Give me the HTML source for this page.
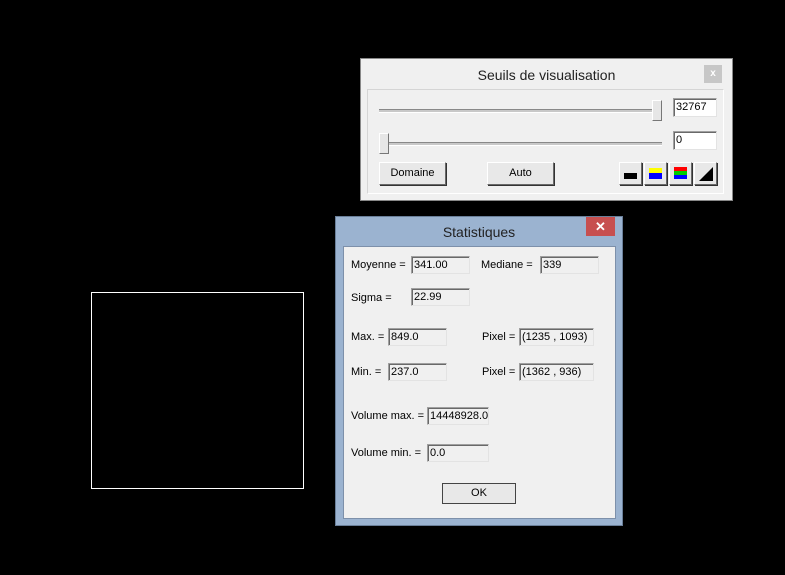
<!DOCTYPE html>
<html><head><meta charset="utf-8"><style>
*{margin:0;padding:0;box-sizing:border-box}
body{width:785px;height:575px;background:#000;position:relative;overflow:hidden;font-family:"Liberation Sans",sans-serif;font-size:11px;color:#000}
.a{position:absolute}
.lbl{position:absolute;font-size:11px;line-height:13px;white-space:nowrap}
.box{position:absolute;background:#f0f0f0;border:1px solid #a0a0a0;border-right-color:#e3e3e3;border-bottom-color:#e3e3e3;box-shadow:inset 1px 1px 0 #696969;font-size:11px;line-height:17px;padding-left:2px}
.wbox{position:absolute;background:#fff;border:1px solid #a0a0a0;border-right-color:#e3e3e3;border-bottom-color:#e3e3e3;box-shadow:inset 1px 1px 0 #696969;font-size:11px;line-height:17px;padding-left:2px}
.btn{position:absolute;background:#e8e8e8;border:1px solid #fff;border-right-color:#696969;border-bottom-color:#696969;box-shadow:1px 1px 0 #333;text-align:center;font-size:11px}
</style></head><body>
<div class="a" style="left:91px;top:292px;width:213px;height:197px;border:1px solid #fff"></div>

<div class="a" style="left:360px;top:58px;width:373px;height:143px;background:#f0f0f0;border:1px solid #888"></div>
<div class="lbl" style="left:360px;top:67px;width:373px;text-align:center;font-size:14px;line-height:16px;color:#222">Seuils de visualisation</div>
<div class="a" style="left:704px;top:65px;width:18px;height:18px;background:#c7c7c7;color:#fff;font-size:10px;text-align:center;line-height:17px;font-weight:bold">x</div>
<div class="a" style="left:367px;top:89px;width:357px;height:105px;border:1px solid #d5d5d5;border-right-color:#fff;border-bottom-color:#fff"></div>
<div class="a" style="left:379px;top:109px;width:280px;height:4px;border-top:1px solid #888;border-bottom:1px solid #fff;background:#c8c8c8"></div>
<div class="a" style="left:652px;top:100px;width:10px;height:21px;background:#e6e6e6;border:1px solid #fff;border-right-color:#777;border-bottom-color:#777"></div>
<div class="wbox" style="left:673px;top:98px;width:44px;height:19px">32767</div>
<div class="a" style="left:379px;top:142px;width:283px;height:4px;border-top:1px solid #888;border-bottom:1px solid #fff;background:#c8c8c8"></div>
<div class="a" style="left:379px;top:133px;width:10px;height:21px;background:#e6e6e6;border:1px solid #fff;border-right-color:#777;border-bottom-color:#777"></div>
<div class="wbox" style="left:673px;top:131px;width:44px;height:19px">0</div>
<div class="btn" style="left:379px;top:162px;width:67px;height:23px;line-height:21px">Domaine</div>
<div class="btn" style="left:487px;top:162px;width:67px;height:23px;line-height:21px">Auto</div>
<div class="btn" style="left:619px;top:162px;width:23px;height:23px"><div class="a" style="left:4px;top:10px;width:13px;height:6px;background:#000"></div></div>
<div class="btn" style="left:644px;top:162px;width:23px;height:23px"><div class="a" style="left:4px;top:5px;width:13px;height:5px;background:#ff0"></div><div class="a" style="left:4px;top:10px;width:13px;height:6px;background:#00f"></div></div>
<div class="btn" style="left:669px;top:162px;width:23px;height:23px"><div class="a" style="left:4px;top:4px;width:13px;height:4px;background:#f00"></div><div class="a" style="left:4px;top:8px;width:13px;height:4px;background:#0c0"></div><div class="a" style="left:4px;top:12px;width:13px;height:4px;background:#00f"></div></div>
<div class="btn" style="left:694px;top:162px;width:23px;height:23px"><svg class="a" style="left:3px;top:3px" width="16" height="16"><polygon points="1,15 15,1 15,15" fill="#000"/></svg></div>

<div class="a" style="left:335px;top:216px;width:288px;height:310px;background:#9bb3d0;border:1px solid #6a7f99"></div>
<div class="lbl" style="left:335px;top:224px;width:288px;text-align:center;font-size:14px;line-height:16px;color:#222">Statistiques</div>
<div class="a" style="left:586px;top:217px;width:29px;height:19px;background:#c74f4f;color:#fff;text-align:center;font-size:13px;line-height:19px;font-weight:bold">✕</div>
<div class="a" style="left:343px;top:246px;width:273px;height:273px;background:#f0f0f0;border:1px solid #7d90aa"></div>

<div class="lbl" style="left:351px;top:259px">Moyenne =</div>
<div class="box" style="left:411px;top:256px;width:59px;height:18px">341.00</div>
<div class="lbl" style="left:481px;top:259px">Mediane =</div>
<div class="box" style="left:540px;top:256px;width:59px;height:18px">339</div>
<div class="lbl" style="left:351px;top:292px">Sigma =</div>
<div class="box" style="left:411px;top:288px;width:59px;height:18px">22.99</div>
<div class="lbl" style="left:351px;top:331px">Max. =</div>
<div class="box" style="left:388px;top:328px;width:59px;height:18px">849.0</div>
<div class="lbl" style="left:482px;top:331px">Pixel =</div>
<div class="box" style="left:519px;top:328px;width:75px;height:18px">(1235 , 1093)</div>
<div class="lbl" style="left:351px;top:366px">Min. =</div>
<div class="box" style="left:388px;top:363px;width:59px;height:18px">237.0</div>
<div class="lbl" style="left:482px;top:366px">Pixel =</div>
<div class="box" style="left:519px;top:363px;width:75px;height:18px">(1362 , 936)</div>
<div class="lbl" style="left:351px;top:410px">Volume max. =</div>
<div class="box" style="left:427px;top:407px;width:62px;height:18px">14448928.0</div>
<div class="lbl" style="left:351px;top:447px">Volume min. =</div>
<div class="box" style="left:427px;top:444px;width:62px;height:18px">0.0</div>
<div class="btn" style="left:442px;top:483px;width:74px;height:21px;line-height:19px;border:1px solid #444;box-shadow:none">OK</div>
</body></html>
